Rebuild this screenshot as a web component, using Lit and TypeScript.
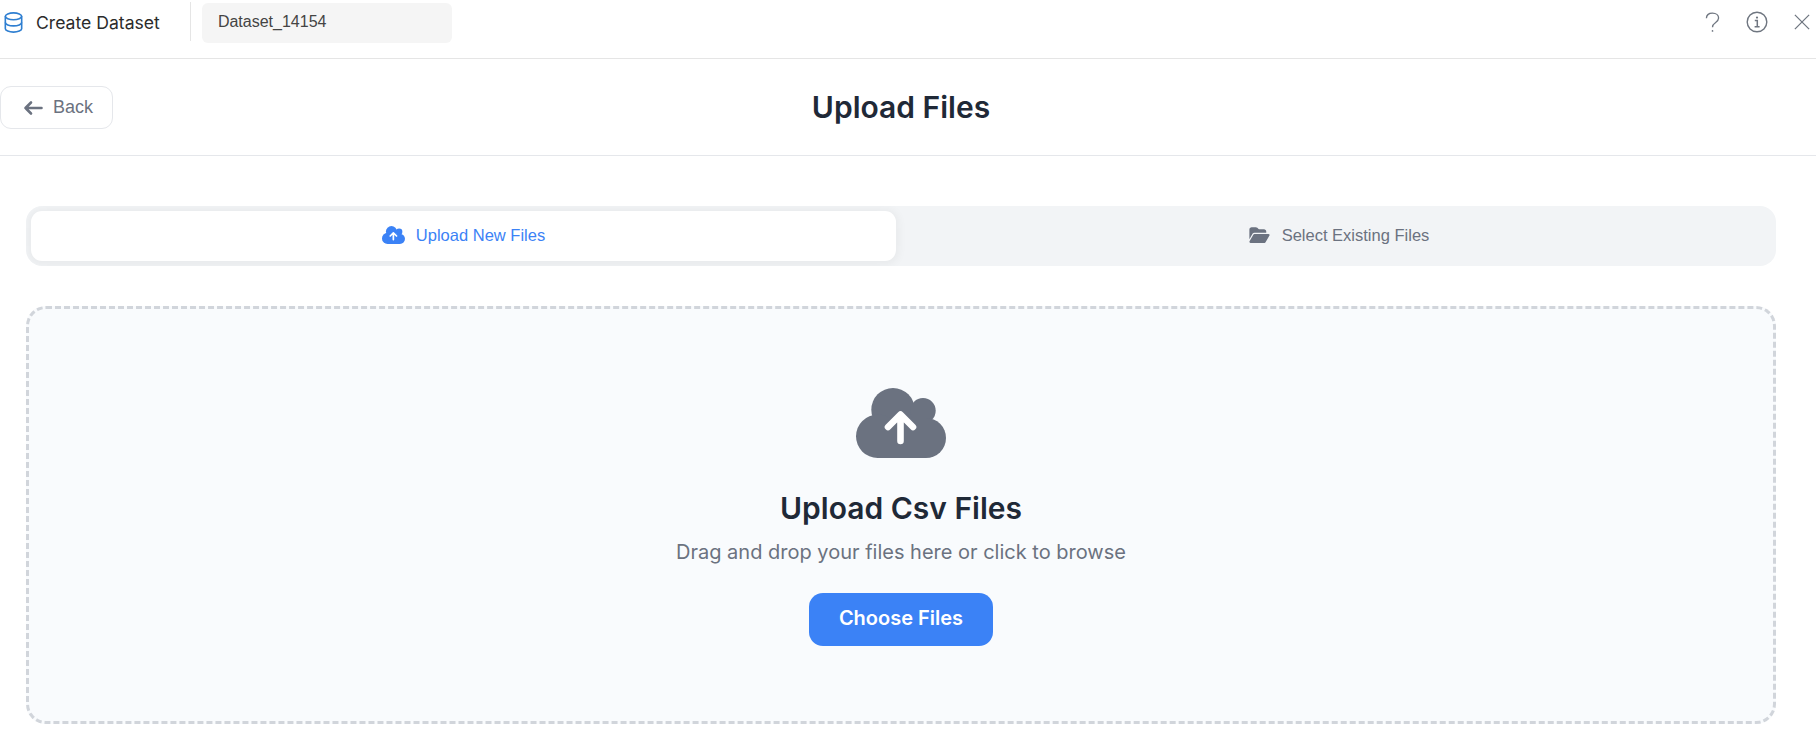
import { LitElement, css, html } from 'lit'
import { customElement } from 'lit/decorators.js'

const cloudUp = html`<svg viewBox="0 0 90 70">
  <g fill="currentColor">
    <circle cx="37" cy="21.7" r="21.7"/>
    <circle cx="67" cy="22.7" r="12.7"/>
    <circle cx="21.7" cy="48.3" r="21.7"/>
    <circle cx="70" cy="50" r="20"/>
    <path d="M22 30H70V70H22z"/>
  </g>
  <path d="M32 39L44.5 26.5L57 39M44.5 27V53" fill="none" stroke="#fff" stroke-width="6.6" stroke-linecap="round" stroke-linejoin="round"/>
</svg>`

const folderOpen = html`<svg viewBox="0 0 576 512" fill="currentColor"><path d="M88.7 223.8L0 375.8V96C0 60.7 28.7 32 64 32H181.5c17 0 33.3 6.7 45.3 18.7l26.5 26.5c12 12 28.3 18.7 45.3 18.7H416c35.3 0 64 28.7 64 64v32H144c-22.8 0-43.8 12.1-55.3 31.8zm27.6 16.1C122.1 230 132.6 224 144 224H544c11.5 0 22 6.2 27.7 16.1s5.7 22.2-.1 32.1l-112 192C453.9 474 443.4 480 432 480H32c-11.5 0-22-6.2-27.7-16.1s-5.7-22.2 .1-32.1l112-192z"/></svg>`

@customElement('app-root')
export class AppRoot extends LitElement {
  render() {
    return html`
      <div class="topbar">
        <svg class="db" viewBox="0 0 20 22" fill="none" stroke="currentColor" stroke-width="1.7">
          <ellipse cx="10" cy="4.5" rx="8.6" ry="3.6"/>
          <path d="M1.4 4.5v13c0 2 3.9 3.6 8.6 3.6s8.6-1.6 8.6-3.6v-13"/>
          <path d="M1.4 11c0 2 3.9 3.6 8.6 3.6s8.6-1.6 8.6-3.6"/>
        </svg>
        <span class="name">Create Dataset</span>
        <span class="divider"></span>
        <div class="field">Dataset_14154</div>
        <div class="actions">
          <svg class="help" viewBox="0 0 16 22" fill="none" stroke="currentColor" stroke-width="1.4">
            <path d="M1.5 6.5C1.5 3 4.3 1 8 1s6.5 2.2 6.5 5.3c0 2.3-1.5 3.6-3.4 4.9C9 12.6 8 13.6 8 16"/>
            <circle cx="8" cy="20" r="0.9" fill="currentColor" stroke="none"/>
          </svg>
          <svg class="info" viewBox="0 0 22 22" fill="none" stroke="currentColor" stroke-width="1.4">
            <circle cx="11" cy="11" r="9.8"/>
            <circle cx="11" cy="6.6" r="1.1" fill="currentColor" stroke="none"/>
            <path d="M8.8 9.6h2.5v6M8.6 15.8h5" stroke-width="1.5"/>
          </svg>
          <svg class="close" viewBox="0 0 18 18" fill="none" stroke="currentColor" stroke-width="1.4">
            <path d="M1 1l16 16M17 1L1 17"/>
          </svg>
        </div>
      </div>

      <div class="header">
        <button class="back">
          <svg viewBox="0 0 20 16" fill="none" stroke="currentColor" stroke-width="2.6" stroke-linecap="round" stroke-linejoin="round">
            <path d="M18.5 8H2.5M8 2.5L2.5 8l5.5 5.5"/>
          </svg>
          Back
        </button>
        <h1>Upload Files</h1>
      </div>

      <div class="content">
        <div class="tabs">
          <div class="tab active">${cloudUp}<span>Upload New Files</span></div>
          <div class="tab other">${folderOpen}<span>Select Existing Files</span></div>
        </div>

        <div class="drop">
          <div class="big-icon">${cloudUp}</div>
          <h2>Upload Csv Files</h2>
          <p>Drag and drop your files here or click to browse</p>
          <button class="choose">Choose Files</button>
        </div>
      </div>
    `
  }

  static styles = css`
    :host {
      display: block;
      width: 1816px;
      height: 736px;
      overflow: hidden;
      background: #fff;
      font-family: Inter, sans-serif;
    }
    .topbar {
      box-sizing: border-box;
      height: 59px;
      display: flex;
      align-items: flex-start;
      border-bottom: 1px solid #e5e5e5;
    }
    .db {
      width: 19px;
      height: 21px;
      margin: 12px 0 0 4px;
      color: #2f7fd1;
    }
    .name {
      margin: 12px 0 0 13px;
      font-size: 17.6px;
      line-height: 22px;
      color: #2b2b2b;
    }
    .divider {
      width: 1px;
      height: 39px;
      margin: 2px 0 0 30px;
      background: #e5e5e5;
    }
    .field {
      box-sizing: border-box;
      width: 250px;
      height: 40px;
      margin: 3px 0 0 11px;
      padding-left: 16px;
      border-radius: 6px;
      background: #f5f5f5;
      font: 16px/38px 'Liberation Sans', sans-serif;
      color: #444;
    }
    .actions {
      margin-left: auto;
      display: flex;
      align-items: center;
      height: 44px;
      color: #6f7680;
    }
    .help {
      width: 15px;
      height: 21px;
    }
    .info {
      width: 22px;
      height: 22px;
      margin-left: 26px;
    }
    .close {
      width: 16px;
      height: 16px;
      margin: 0 6px 0 26px;
    }
    .header {
      box-sizing: border-box;
      height: 97px;
      position: relative;
      display: flex;
      align-items: center;
      border-bottom: 1px solid #e5e7eb;
    }
    .back {
      position: absolute;
      left: 0;
      top: 27px;
      box-sizing: border-box;
      width: 113px;
      height: 43px;
      display: flex;
      align-items: center;
      gap: 10px;
      padding: 0 0 0 22px;
      border: 1px solid #e5e7eb;
      border-radius: 11px;
      background: #fff;
      font: 18px 'Liberation Sans', sans-serif;
      color: #6b7280;
    }
    .back svg {
      width: 20px;
      height: 16px;
    }
    h1 {
      width: 1802px;
      margin: 0;
      text-align: center;
      font-size: 30px;
      font-weight: 600;
      color: #1f2937;
    }
    .content {
      box-sizing: border-box;
      width: 1802px;
      padding: 50px 26px 0;
    }
    .tabs {
      box-sizing: border-box;
      height: 60px;
      display: grid;
      grid-template-columns: 865px 1fr;
      padding: 5px;
      overflow: hidden;
      border-radius: 16px;
      background: #f2f4f6;
    }
    .tab {
      display: flex;
      align-items: center;
      justify-content: center;
      gap: 11px;
      padding-bottom: 2px;
      border-radius: 11px;
      font: 16.5px 'Liberation Sans', sans-serif;
      color: #6b7280;
    }
    .tab svg {
      width: 23px;
      height: 18px;
    }
    .tab.other {
      padding-left: 10px;
    }
    .tab.active {
      background: #fff;
      color: #3b82f6;
      box-shadow: 0 1px 8px 3px rgba(0, 0, 0, 0.045);
    }
    .drop {
      box-sizing: border-box;
      height: 418px;
      margin-top: 40px;
      padding-top: 79px;
      display: flex;
      flex-direction: column;
      align-items: center;
      border: 3px dashed #d1d5db;
      border-radius: 20px;
      background: #f9fbfd;
    }
    .big-icon {
      width: 90px;
      height: 70px;
      color: #6b7280;
    }
    h2 {
      margin: 31px 0 0;
      font-size: 30px;
      line-height: 38px;
      font-weight: 600;
      color: #1f2937;
    }
    p {
      margin: 12px 0 0;
      font-size: 20px;
      line-height: 27px;
      color: #6b7280;
    }
    .choose {
      width: 184px;
      height: 53px;
      margin-top: 27px;
      border: none;
      border-radius: 14px;
      background: #3b82f6;
      color: #fff;
      font: 600 20px/49px Inter, sans-serif;
      padding: 0 0 2px;
    }
  `
}
